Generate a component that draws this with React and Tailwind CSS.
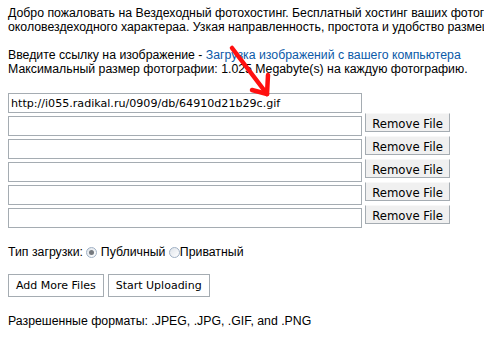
import React from 'react'

const rows = [1, 2, 3, 4, 5]

function Radio({ checked }) {
  return (
    <span className="inline-flex w-[11px] h-[11px] rounded-full border border-[#9fb0c4] bg-gradient-to-br from-[#dfe4ea] to-white items-center justify-center">
      {checked && <span className="w-[5px] h-[5px] rounded-full bg-[#75797e]" />}
    </span>
  )
}

export default function App() {
  return (
    <div className="relative w-[484px] h-[340px] overflow-hidden bg-white text-black font-['Liberation_Sans',Arial,sans-serif] text-[12.3px] leading-[14px] px-[8px] pt-[6px]">
      <p className="whitespace-nowrap">Добро пожаловать на Вездеходный фотохостинг. Бесплатный хостинг ваших фотографий</p>
      <p className="whitespace-nowrap">околовездеходного характераа. Узкая направленность, простота и удобство размещения</p>
      <div className="h-[14px]" />
      <p className="whitespace-nowrap">
        Введите ссылку на изображение - <a className="text-[#0b5aa8]">Загрузка изображений с вашего компьютера</a>
      </p>
      <p className="whitespace-nowrap">Максимальный размер фотографии: 1.025 Megabyte(s) на каждую фотографию.</p>

      <div className="mt-[17px] font-['DejaVu_Sans',Verdana,sans-serif] text-[11.1px]">
        <input
          readOnly
          value="http://i055.radikal.ru/0909/db/64910d21b29c.gif"
          className="block w-[354px] h-[20px] border border-[#a5acb2] px-[2px] outline-none"
        />
        {rows.map((r) => (
          <div key={r} className="flex items-start h-[23px]">
            <input readOnly className="block mt-[3px] w-[354px] h-[20px] border border-[#a5acb2] outline-none" />
            <button className="ml-[3px] w-[85px] h-[19px] border border-[#a5acb2] border-t-[#f8f8f8] bg-[#f0f0f0] text-[11.7px] leading-[17px] pt-[2px]">
              Remove File
            </button>
          </div>
        ))}
      </div>

      <div className="mt-[17px] flex items-center h-[14px] whitespace-nowrap">
        Тип загрузки:&nbsp;<Radio checked />&nbsp;Публичный&nbsp;<Radio />Приватный
      </div>

      <div className="mt-[15px] flex gap-[4px] font-['DejaVu_Sans',Verdana,sans-serif] text-[11px]">
        <button className="h-[23px] px-[7px] border border-[#a5acb2] bg-white">Add More Files</button>
        <button className="h-[23px] px-[7px] border border-[#a5acb2] bg-white">Start Uploading</button>
      </div>

      <p className="mt-[17px] whitespace-nowrap">Разрешенные форматы: .JPEG, .JPG, .GIF, and .PNG</p>

      <svg className="absolute left-0 top-0 pointer-events-none" width="484" height="340">
        <g stroke="#ff1010" strokeWidth="4.5" strokeLinecap="round" fill="none">
          <path d="M232 48 L267 94" />
          <path d="M267 94 L252 90" />
          <path d="M267 94 L268 75" />
        </g>
      </svg>
    </div>
  )
}
